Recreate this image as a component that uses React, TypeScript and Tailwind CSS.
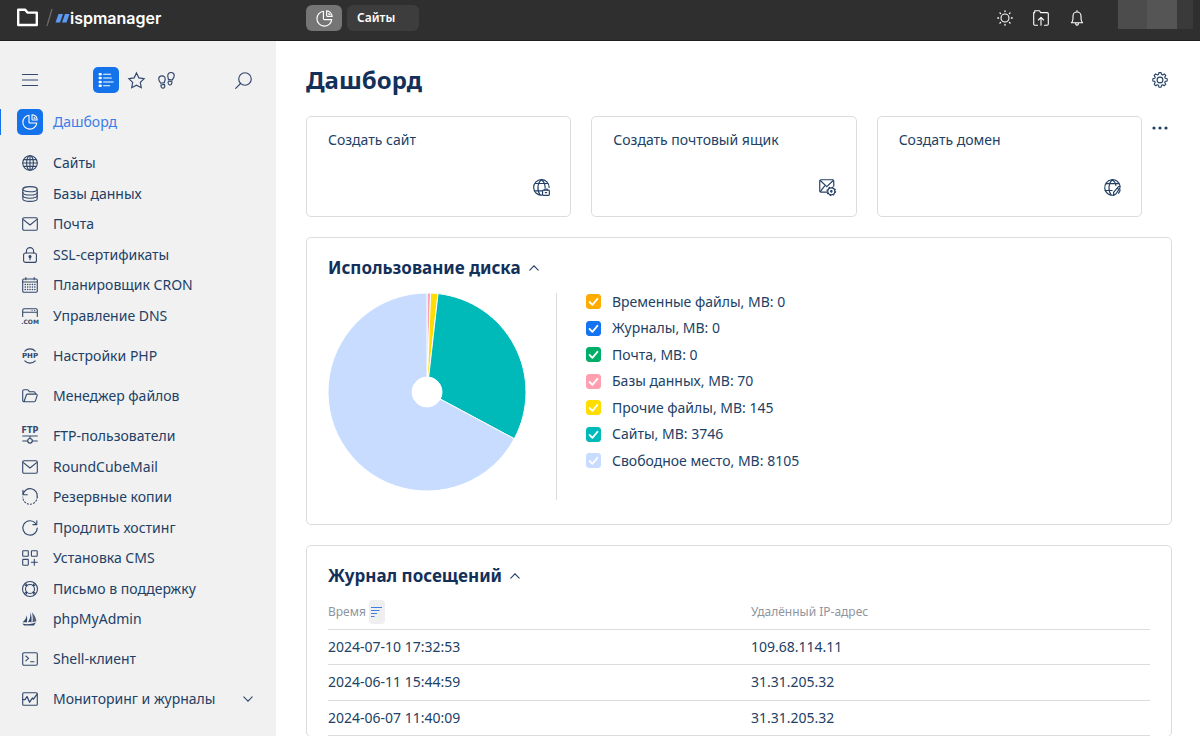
import { useState, type ReactNode } from 'react';
import clsx from 'clsx';

type NavItem = { label: string; icon: ReactNode; expandable?: boolean };

const Icon = ({ children, size = 16, className }: { children: ReactNode; size?: number; className?: string }) => (
  <svg
    width={size}
    height={size}
    viewBox="0 0 16 16"
    fill="none"
    stroke="currentColor"
    strokeWidth="1.1"
    strokeLinecap="round"
    strokeLinejoin="round"
    className={clsx('shrink-0 overflow-visible', className)}
    aria-hidden="true"
  >
    {children}
  </svg>
);

// Short caption drawn inside an icon (PHP, FTP, .COM)
const IconLabel = ({ y, size, children }: { y: number; size: number; children: string }) => (
  <text
    x="8"
    y={y}
    textAnchor="middle"
    fontSize={size}
    fontWeight="700"
    fontFamily="DejaVu Sans, sans-serif"
    fill="currentColor"
    stroke="none"
  >
    {children}
  </text>
);

const PieIcon = ({ size }: { size?: number }) => (
  <Icon size={size}>
    <path d="M7 1.2A7 7 0 1 0 14.8 9H7.8a.8.8 0 0 1-.8-.8V1.2Z" />
    <path d="M10 .8v4.4c0 .5.3.8.8.8h4.4A5.6 5.6 0 0 0 10 .8Z" />
    <path d="M12.2 3.2v1h1" />
  </Icon>
);

const GlobeIcon = () => (
  <Icon>
    <circle cx="8" cy="8" r="7.3" />
    <ellipse cx="8" cy="8" rx="3.4" ry="7.3" />
    <path d="M8 .7v14.6M1.7 4.6h12.6M.7 8h14.6M1.7 11.4h12.6" />
  </Icon>
);

const DatabaseIcon = () => (
  <Icon>
    <ellipse cx="8" cy="3.2" rx="7.2" ry="2.6" />
    <path d="M.8 3.2v9.6c0 1.4 3.2 2.6 7.2 2.6s7.2-1.2 7.2-2.6V3.2" />
    <path d="M.8 6.4C.8 7.8 4 9 8 9s7.2-1.2 7.2-2.6M.8 9.6c0 1.4 3.2 2.6 7.2 2.6s7.2-1.2 7.2-2.6" />
  </Icon>
);

const MailIcon = () => (
  <Icon>
    <rect x=".7" y="1.8" width="14.6" height="12.4" rx="1.2" />
    <path d="M1.4 3.6 8 9l6.6-5.4" />
  </Icon>
);

const LockIcon = () => (
  <Icon>
    <rect x="1.6" y="6" width="12.8" height="9.4" rx="2" />
    <path d="M4.4 6V4.2a3.6 3.6 0 0 1 7.2 0V6" />
    <circle cx="8" cy="9.6" r="1" fill="currentColor" />
    <path d="M8 10v2.6" />
  </Icon>
);

const CalendarIcon = () => (
  <Icon>
    <rect x=".7" y="2" width="14.6" height="13.3" rx="1.2" />
    <path d="M.7 5h14.6M3.8.6v2.2M12.2.6v2.2" />
    <path
      d="M3.2 7.4h.1M5.6 7.4h.1M8 7.4h.1M10.4 7.4h.1M12.8 7.4h.1M3.2 10h.1M5.6 10h.1M8 10h.1M10.4 10h.1M12.8 10h.1M3.2 12.6h.1M5.6 12.6h.1M8 12.6h.1M10.4 12.6h.1M12.8 12.6h.1"
      strokeWidth="1.5"
    />
  </Icon>
);

const DnsIcon = () => (
  <Icon>
    <path d="M.7 8.4V2.2C.7 1.3 1.3.8 2.1.8h11.8c.8 0 1.4.5 1.4 1.4v6.2M.7 4.2h14.6" />
    <path d="M10 2.5h.1M12.6 2.5h.1" />
    <IconLabel y={15.6} size={6}>
      .COM
    </IconLabel>
  </Icon>
);

const PhpIcon = () => (
  <Icon>
    <path d="M2.8 3.2a7 7 0 0 1 10.4 0M2.8 12.8a7 7 0 0 0 10.4 0" />
    <IconLabel y={10.4} size={7}>
      PHP
    </IconLabel>
  </Icon>
);

const FolderOpenIcon = () => (
  <Icon>
    <path d="M2 13.8 4.3 7c.2-.6.6-.9 1.2-.9h8.6c.8 0 1.3.6 1.1 1.3l-1.7 5.2c-.3.8-.8 1.2-1.6 1.2H2.1c-.8 0-1.4-.6-1.4-1.4V3.2c0-.8.6-1.4 1.4-1.4h3.1c.6 0 1 .3 1.4.8l.8 1.1h4.4c.9 0 1.5.6 1.5 1.5v.9" />
  </Icon>
);

const FtpIcon = () => (
  <Icon>
    <IconLabel y={5.2} size={8}>
      FTP
    </IconLabel>
    <path d="M.7 8h14.6M8 8v2.4M.7 13h5M10.3 13h5" />
    <circle cx="8" cy="12.8" r="2.3" />
  </Icon>
);

const RestoreIcon = () => (
  <Icon>
    <path d="M.9 1.4v4.4h4.4M1 5.6A7.2 7.2 0 0 1 15.2 8" />
    <path d="M15.2 8A7.2 7.2 0 0 1 .8 8" strokeDasharray="1.2 2" />
  </Icon>
);

const RefreshIcon = () => (
  <Icon>
    <path d="M13.6 3.4A7.2 7.2 0 1 0 15.2 8M14.8.8v3.8h-3.9" />
  </Icon>
);

const AppsIcon = () => (
  <Icon>
    <rect x=".7" y=".7" width="5.6" height="5.6" rx=".6" />
    <rect x="9.4" y=".7" width="5.8" height="5.6" rx=".6" />
    <rect x=".7" y="9.4" width="5.6" height="5.8" rx=".6" />
    <path d="M12.3 9.2v6M9.3 12.2h6" />
  </Icon>
);

const SupportIcon = () => (
  <Icon>
    <circle cx="8" cy="8" r="7.5" />
    <circle cx="8" cy="8" r="4.5" />
    <path d="m2.6 3.8 2 1.3M3.8 2.6l1.4 2M13.4 3.8l-2 1.3M12.2 2.6l-1.4 2M2.6 12.2l2-1.3M3.8 13.4l1.4-2M13.4 12.2l-2-1.3M12.2 13.4l-1.4-2" />
  </Icon>
);

const SailIcon = () => (
  <Icon>
    <g fill="currentColor" stroke="none">
      <path d="M4.8 4.2C4.4 7 2.8 9.4.4 11.4c1.6-.4 3-.3 4.4.2.5-2.4.5-5 0-7.4Z" />
      <path d="M8.4 1.4c.2 3.8-.6 7.2-2.6 10.2 1.4-.6 2.4-.6 3.6-.2.4-3.2.2-6.6-1-10Z" />
      <path d="M9.8 1.2c1 3.2 1.3 6.6.6 10l4-1c-.4-3.6-2-6.6-4.6-9Z" opacity=".85" />
      <path d="M.4 12.6c4.4 1 9 .8 13.4-1.4-.4 1.2-1 2.4-2 3.4H2.2c-.8-.6-1.4-1.2-1.8-2Z" />
    </g>
  </Icon>
);

const ShellIcon = () => (
  <Icon>
    <rect x=".7" y="1.7" width="14.6" height="12.6" rx="1.2" />
    <path d="m3.8 5 2.8 2.4-2.8 2.4M8.6 10.800h3.400" />
  </Icon>
);

const MonitorIcon = () => (
  <Icon>
    <rect x=".7" y="1.7" width="14.6" height="12.6" rx="1" />
    <path d="M.9 8.6h2l2.1-3 2.6 5.6L10.4 7l1 1.2L15 3.4" strokeWidth="1.3" />
  </Icon>
);

const ChevronIcon = ({ up }: { up?: boolean }) => (
  <svg width="10" height="6" viewBox="0 0 10 6" fill="none" stroke="currentColor" strokeWidth="1.1" strokeLinecap="round" aria-hidden="true">
    <path d={up ? 'M.8 5.2 5 .9l4.2 4.3' : 'M.8.8 5 5.1 9.2.8'} />
  </svg>
);

const navGroups: NavItem[][] = [
  [
    { label: 'Сайты', icon: <GlobeIcon /> },
    { label: 'Базы данных', icon: <DatabaseIcon /> },
    { label: 'Почта', icon: <MailIcon /> },
    { label: 'SSL-сертификаты', icon: <LockIcon /> },
    { label: 'Планировщик CRON', icon: <CalendarIcon /> },
    { label: 'Управление DNS', icon: <DnsIcon /> },
  ],
  [{ label: 'Настройки PHP', icon: <PhpIcon /> }],
  [{ label: 'Менеджер файлов', icon: <FolderOpenIcon /> }],
  [
    { label: 'FTP-пользователи', icon: <FtpIcon /> },
    { label: 'RoundCubeMail', icon: <MailIcon /> },
    { label: 'Резервные копии', icon: <RestoreIcon /> },
    { label: 'Продлить хостинг', icon: <RefreshIcon /> },
    { label: 'Установка CMS', icon: <AppsIcon /> },
    { label: 'Письмо в поддержку', icon: <SupportIcon /> },
    { label: 'phpMyAdmin', icon: <SailIcon /> },
  ],
  [{ label: 'Shell-клиент', icon: <ShellIcon /> }],
  [{ label: 'Мониторинг и журналы', icon: <MonitorIcon />, expandable: true }],
];

const quickActions = [
  {
    label: 'Создать сайт',
    icon: (
      <Icon size={17}>
        <path d="M8.4 15.2A7.3 7.3 0 1 1 15.2 8" />
        <path d="M8 .7C4 3.4 3.6 11 6.6 15M8 .7c2.4 1.8 3.4 4.4 3.4 7.3M2.2 4.2h11.600M1.4 11.2h7" />
        <rect x="9" y="10.4" width="6.400" height="5" rx=".8" />
        <path d="M11 10.2v-.8h2.4v.8M11.6 12.8h1.2" />
      </Icon>
    ),
  },
  {
    label: 'Создать почтовый ящик',
    icon: (
      <Icon size={17}>
        <path d="M7.8 12.4H2c-.8 0-1.300-.5-1.300-1.300V2C.7 1.200 1.200.7 2 .7h10.600c.8 0 1.300.5 1.300 1.300v4.800" />
        <path d="m1.2 1.4 6.1 5.8 6.1-5.8M1.2 11.800l4-5" />
        <circle cx="11.6" cy="11.6" r="3.3" />
        <circle cx="11.6" cy="11.6" r="4" strokeDasharray="1.4 1.74" strokeLinecap="butt" />
        <circle cx="11.6" cy="11.6" r=".7" />
      </Icon>
    ),
  },
  {
    label: 'Создать домен',
    icon: (
      <Icon size={17}>
        <path d="M15.2 7A7.3 7.3 0 1 0 9 15.2" />
        <path d="M8 .7C4.2 3.4 3.6 11 6.6 15M8 .7c1.800 1.400 2.900 3.200 3.200 5.300M2 4.400h12M1 10.800h6.600M9.200 15.400l-.2-2.800 4.600-5.400c.6-.6 1.800.3 1.400 1.100l-3.800 5.800-2 1.300ZM12.400 8.600l1.500 1.200M13.600 13.400c.8-.8 1.400-2 1.600-3.200" />
      </Icon>
    ),
  },
];

const diskUsage = [
  { label: 'Временные файлы', value: 0, color: '#ffab00', box: 'checked:bg-[#ffab00] border-[#ffab00]' },
  { label: 'Журналы', value: 0, color: '#1373f0', box: 'checked:bg-[#1373f0] border-[#1373f0]' },
  { label: 'Почта', value: 0, color: '#00ae68', box: 'checked:bg-[#00ae68] border-[#00ae68]' },
  { label: 'Базы данных', value: 70, color: '#ff9fb0', box: 'checked:bg-[#ff9fb0] border-[#ff9fb0]' },
  { label: 'Прочие файлы', value: 145, color: '#ffdd00', box: 'checked:bg-[#ffdd00] border-[#ffdd00]' },
  { label: 'Сайты', value: 3746, color: '#00baba', box: 'checked:bg-[#00baba] border-[#00baba]' },
  { label: 'Свободное место', value: 8105, color: '#c8dcff', box: 'checked:bg-[#c8dcff] border-[#c8dcff]' },
];

const visits = [
  { time: '2024-07-10 17:32:53', ip: '109.68.114.11' },
  { time: '2024-06-11 15:44:59', ip: '31.31.205.32' },
  { time: '2024-06-07 11:40:09', ip: '31.31.205.32' },
];

const point = (angle: number, r: number) => `${99 + r * Math.sin(angle)} ${99 - r * Math.cos(angle)}`;

function DiskChart({ hidden }: { hidden: string[] }) {
  const shown = diskUsage.filter((d) => d.value > 0 && !hidden.includes(d.label));
  const total = shown.reduce((sum, d) => sum + d.value, 0);
  let angle = 0;

  return (
    <svg width="198" height="198" viewBox="0 0 198 198" className="shrink-0" role="img" aria-label="Использование диска">
      {shown.map((d) => {
        const start = angle;
        // a full circle cannot be drawn with one arc
        angle += Math.min((d.value / total) * Math.PI * 2, 6.283);
        const large = angle - start > Math.PI ? 1 : 0;
        return (
          <path
            key={d.label}
            d={`M${point(start, 15)}L${point(start, 99)}A99 99 0 ${large} 1 ${point(angle, 99)}L${point(angle, 15)}A15 15 0 ${large} 0 ${point(start, 15)}Z`}
            fill={d.color}
            stroke="#fff"
          />
        );
      })}
    </svg>
  );
}

function TopBar() {
  return (
    <header className="flex h-[41px] shrink-0 items-start border-b border-[#1f1f1f] bg-[#2f2f2f] text-white">
      <div className="flex h-9 w-[276px] shrink-0 items-center pl-4">
        <svg width="23" height="20" viewBox="0 0 23 20" fill="none" stroke="currentColor" strokeWidth="2.4" aria-hidden="true">
          <path d="M2.2 1.800h7l2.200 2.800h9.400v12.400H2.200V1.800Z" strokeLinejoin="round" />
        </svg>
        <svg width="31" height="20" viewBox="0 0 31 20" aria-hidden="true">
          <path d="M8 18 13 1" stroke="#6a6a6a" strokeWidth="1.3" />
          <path d="M19.500 6h4.500l-3 8.500h-4.500ZM26 6h4.500l-3 8.500H23Z" fill="#5b9bf5" />
        </svg>
        <span className="font-['Inter','Liberation_Sans',sans-serif] text-base font-semibold">ispmanager</span>
      </div>
      <nav className="flex gap-[5px] pt-[5px] pl-[30px]">
        <a href="#dashboard" aria-label="Дашборд" className="flex h-[26px] w-9 items-center justify-center rounded-md bg-[#757575]">
          <PieIcon size={17} />
        </a>
        <a href="#sites" className="flex h-[26px] w-[72px] items-center rounded-md bg-[#3d3d3d] pl-[10px] text-xs font-semibold">
          Сайты
        </a>
      </nav>
      <div className="ml-auto flex h-9 items-center gap-5 pr-[33px]">
        <button aria-label="Тема">
          <Icon>
            <circle cx="8" cy="8" r="4" />
            <path d="M8 .8v.8M8 14.4v.8M.8 8h.8M14.4 8h.8M2.9 2.9l.6.6M12.5 12.5l.6.6M2.9 13.1l.6-.6M12.5 3.5l.6-.6" strokeWidth="1.3" />
          </Icon>
        </button>
        <button aria-label="Загрузка">
          <Icon>
            <path d="M4.500 15.200H1.800c-.7 0-1.100-.4-1.100-1.100V2.600h1V.8h4.700l1.300 1.800h6.500c.7 0 1.100.4 1.100 1.100v10.400c0 .7-.4 1.100-1.100 1.100h-2.700M8 15.200V7.600M5.400 10 8 7.400l2.600 2.600" />
          </Icon>
        </button>
        <button aria-label="Уведомления">
          <Icon>
            <path d="M8 .6v1.200M2.400 12.800c1.200-1.200 1.600-2.400 1.600-4.200V6a4 4 0 0 1 8 0v2.600c0 1.800.4 3 1.600 4.200H2.400ZM6.600 13.200c0 2.600 2.800 2.600 2.800 0" />
          </Icon>
        </button>
      </div>
      <div className="flex h-[29px] pr-[7px]">
        <div className="w-[29px] bg-[#4c4c4c]" />
        <div className="w-[30px] bg-[#555]" />
        <div className="w-4 bg-[#3a3a3a]" />
      </div>
    </header>
  );
}

function Sidebar() {
  return (
    <aside className="w-[276px] shrink-0 overflow-hidden bg-[#f1f1f1] text-[#33486b]">
      <div className="flex items-center pt-[26px] pr-6 pl-[22px]">
        <button aria-label="Меню">
          <Icon>
            <path d="M.4 2.5h15.2M.4 8h15.2M.4 13.5h15.2" />
          </Icon>
        </button>
        <button aria-label="Список" className="ml-[55px] flex size-[26px] items-center justify-center rounded-[5px] bg-[#1473ea] text-white">
          <Icon>
            <path d="M5.6 2.2h7M5.6 6h7.8M5.6 10h9.6M5.6 13.8h6" />
            <path d="M1.8 2.2h.8M1.8 6h.8M1.8 10h.8M1.8 13.8h.8" strokeWidth="2.6" />
          </Icon>
        </button>
        <button aria-label="Избранное" className="ml-[9px]">
          <Icon size={17}>
            <path d="m8 .9 2.2 4.6 5 .7-3.6 3.6.9 5L8 12.4l-4.5 2.4.9-5L.8 6.2l5-.7L8 .9Z" strokeLinejoin="miter" />
          </Icon>
        </button>
        <button aria-label="История" className="ml-[13px]">
          <Icon size={17}>
            <path d="M3.700 3.600c2.200 0 3.300 1.700 3 3.500-.2 1.100-.6 2-.7 2.900l-3.400.6C1.900 9.500.7 8.100.7 6.500c0-1.700 1.300-2.900 3-2.900ZM2.700 12.200l3.300-.6c.8 1.400.4 3.500-1.100 3.700-1.400.2-2.100-1.300-2.200-3.100ZM12.300.5C10.100.4 9 2.200 9.200 4c.2 1.100.5 2 .6 2.900l3.500.7c.8-1 2-2.600 2-4.200 0-1.700-1.300-2.800-3-2.900ZM13.200 9.200l-3.300-.7c-.8 1.400-.4 3.500 1.100 3.700 1.400.2 2.100-1.200 2.200-3Z" />
          </Icon>
        </button>
        <button aria-label="Поиск" className="ml-auto">
          <Icon size={17}>
            <circle cx="9.4" cy="6.6" r="5.9" />
            <path d="m5.2 10.8-4.6 4.6" />
          </Icon>
        </button>
      </div>

      <nav className="flex flex-col gap-[10px] pt-4">
        <a href="#dashboard" className="mb-[3px] flex h-[26px] items-center gap-[10px] border-l border-[#1473ea] pl-4 text-[#3c7de6]">
          <span className="flex size-[26px] items-center justify-center rounded-[5px] bg-[#1473ea] text-white">
            <PieIcon />
          </span>
          Дашборд
        </a>
        {navGroups.map((group) => (
          <ul key={group[0].label}>
            {group.map((item) => (
              <li key={item.label} className="h-[30px] even:h-[31px]">
                <a href="#section" className="flex h-full items-center gap-[15px] pr-[23px] pl-[22px]">
                  {item.icon}
                  <span className="whitespace-nowrap text-[#223f66]">{item.label}</span>
                  {item.expandable && (
                    <span className="ml-auto">
                      <ChevronIcon />
                    </span>
                  )}
                </a>
              </li>
            ))}
          </ul>
        ))}
      </nav>
    </aside>
  );
}

function Panel({ title, children }: { title: string; children: ReactNode }) {
  const [open, setOpen] = useState(true);

  return (
    <section className="mt-5 rounded-[5px] border border-[#dcdcdc] px-[21px] pt-[18px]">
      <button onClick={() => setOpen(!open)} className="flex h-6 items-center gap-2">
        <h2 className="text-[17px] font-bold text-[#12305a]">{title}</h2>
        <ChevronIcon up={open} />
      </button>
      {open && children}
    </section>
  );
}

export default function App() {
  const [hidden, setHidden] = useState<string[]>([]);

  const toggle = (label: string) => {
    setHidden((prev) => (prev.includes(label) ? prev.filter((l) => l !== label) : [...prev, label]));
  };

  return (
    <div className="flex h-screen flex-col bg-white font-['Noto_Sans','Open_Sans',sans-serif] text-sm text-[#223f66]">
      <TopBar />
      <div className="flex min-h-0 flex-1">
        <Sidebar />

        <main className="min-w-0 flex-1 overflow-y-auto pr-7 pb-5 pl-[30px] [scrollbar-width:none]">
          <div className="flex items-center justify-between pt-[23px] pr-1">
            <h1 className="text-2xl font-bold text-[#12305a]">Дашборд</h1>
            <button aria-label="Настройки">
              <Icon>
                <circle cx="8" cy="8" r="2.9" />
                <path d="m6.5 2.500.4-1.900h2.200l.4 1.900 1.100.5 1.600-1.100 1.600 1.600L12.700 5.100l.5 1.100 2 .5v2.300l-2 .4-.5 1.100 1.100 1.700-1.600 1.600-1.600-1.100-1.100.5-.4 2H6.900l-.4-2-1.100-.5-1.700 1.100-1.600-1.600 1.100-1.700-.4-1.100-2-.4V6.700l2-.5.4-1.100-1.100-1.600 1.600-1.600L5.400 3l1.100-.5Z" />
              </Icon>
            </button>
          </div>

          {/* Quick actions */}
          <div className="mt-5 flex gap-[10px]">
            <div className="grid flex-1 grid-cols-3 gap-5">
              {quickActions.map((action) => (
                <button
                  key={action.label}
                  className="flex h-[101px] flex-col justify-between rounded-[5px] border border-[#dcdcdc] pt-[13px] pr-5 pb-5 pl-[21px] text-left"
                >
                  {action.label}
                  <span className="self-end">{action.icon}</span>
                </button>
              ))}
            </div>
            <button aria-label="Ещё" className="mr-1 self-start pt-1">
              <svg width="16" height="16" viewBox="0 0 16 16" fill="currentColor" aria-hidden="true">
                <circle cx="2" cy="8" r="1.6" />
                <circle cx="8" cy="8" r="1.6" />
                <circle cx="14" cy="8" r="1.6" />
              </svg>
            </button>
          </div>

          <Panel title="Использование диска">
            <div className="mt-[13px] mb-6 flex">
              <DiskChart hidden={hidden} />
              <div className="ml-[30px] h-[207px] border-l border-[#dcdcdc] pl-[29px]">
                {diskUsage.map((d) => (
                  <label key={d.label} className="flex h-[26px] items-center gap-[11px] odd:h-[27px] first:-mt-[5px]">
                    <span className="relative flex size-[15px]">
                      <input
                        type="checkbox"
                        checked={!hidden.includes(d.label)}
                        onChange={() => toggle(d.label)}
                        className={clsx('size-[15px] appearance-none rounded-[3px] border', d.box)}
                      />
                      <svg
                        viewBox="0 0 15 15"
                        fill="none"
                        stroke="#fff"
                        strokeWidth="1.8"
                        strokeLinecap="round"
                        strokeLinejoin="round"
                        className="pointer-events-none absolute inset-0"
                        aria-hidden="true"
                      >
                        <path d="m3.6 8 2.8 2.8 5-6" />
                      </svg>
                    </span>
                    {d.label}, MB: {d.value}
                  </label>
                ))}
              </div>
            </div>
          </Panel>

          <Panel title="Журнал посещений">
            <table className="mt-[7px] w-full table-fixed text-left">
              <thead className="text-xs text-[#8f959d]">
                <tr className="h-[34px] border-b border-[#dcdcdc]">
                  <th className="w-[423px] p-0 font-normal">
                    <span className="flex items-center gap-[3px]">
                      Время
                      <button aria-label="Сортировка" className="flex h-6 w-4 items-center justify-center rounded bg-[#efefef] text-[#3c7de6]">
                        <svg width="11" height="12" viewBox="0 0 11 12" stroke="currentColor" strokeWidth="1.2" aria-hidden="true">
                          <path d="M0 1.5h11M0 4.5h8.5M0 7.5h6M0 10.5h3.5" />
                        </svg>
                      </button>
                    </span>
                  </th>
                  <th className="p-0 font-normal">Удалённый IP-адрес</th>
                </tr>
              </thead>
              <tbody>
                {visits.map((visit) => (
                  <tr key={visit.time} className="h-[35px] border-b border-[#dcdcdc] even:h-9">
                    <td>{visit.time}</td>
                    <td>{visit.ip}</td>
                  </tr>
                ))}
              </tbody>
            </table>
          </Panel>
        </main>
      </div>
    </div>
  );
}
